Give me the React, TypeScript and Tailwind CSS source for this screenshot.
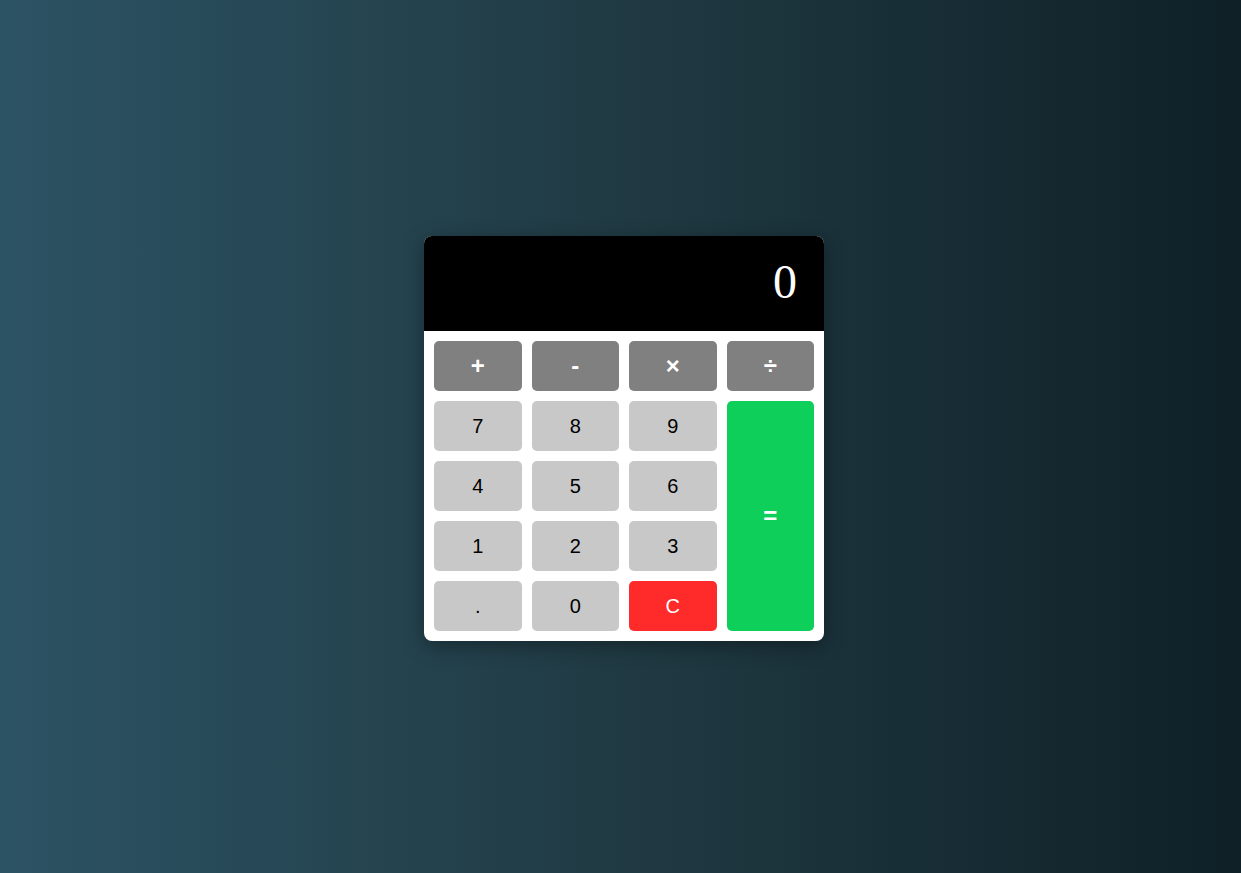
import React from "react";

export default function App() {
  const num = "h-[50px] rounded-[5px] bg-[#c8c8c8] text-black text-[20px]";
  const op = "h-[50px] rounded-[5px] bg-[#808080] text-white text-[24px] font-bold";
  return (
    <div
      className="w-full h-[873px] flex items-center justify-center bg-[linear-gradient(to_right,#2c5364,#203a43,#0f2027)]"
      style={{ fontFamily: '"Liberation Sans", Arial, sans-serif' }}
    >
      <div className="w-[400px] rounded-[8px] bg-white overflow-hidden shadow-[0_5px_20px_rgba(0,0,0,0.35)] mt-[4px] ml-[7px]">
        <div
          className="h-[95px] bg-black flex items-center justify-end pr-[27px] text-white text-[48px] leading-none pb-[4px]"
          style={{ fontFamily: '"Liberation Serif", "Times New Roman", serif' }}
        >
          0
        </div>
        <div className="grid grid-cols-4 gap-[10px] p-[10px] auto-rows-[50px]">
          <button className={op}>+</button>
          <button className={op}>-</button>
          <button className={op}>×</button>
          <button className={op}>÷</button>
          <button className={num}>7</button>
          <button className={num}>8</button>
          <button className={num}>9</button>
          <button className="row-span-4 rounded-[5px] bg-[#0ecf59] text-white text-[24px] font-bold">=</button>
          <button className={num}>4</button>
          <button className={num}>5</button>
          <button className={num}>6</button>
          <button className={num}>1</button>
          <button className={num}>2</button>
          <button className={num}>3</button>
          <button className={num}>.</button>
          <button className={num}>0</button>
          <button className="h-[50px] rounded-[5px] bg-[#ff2a2a] text-white text-[20px]">C</button>
        </div>
      </div>
    </div>
  );
}
